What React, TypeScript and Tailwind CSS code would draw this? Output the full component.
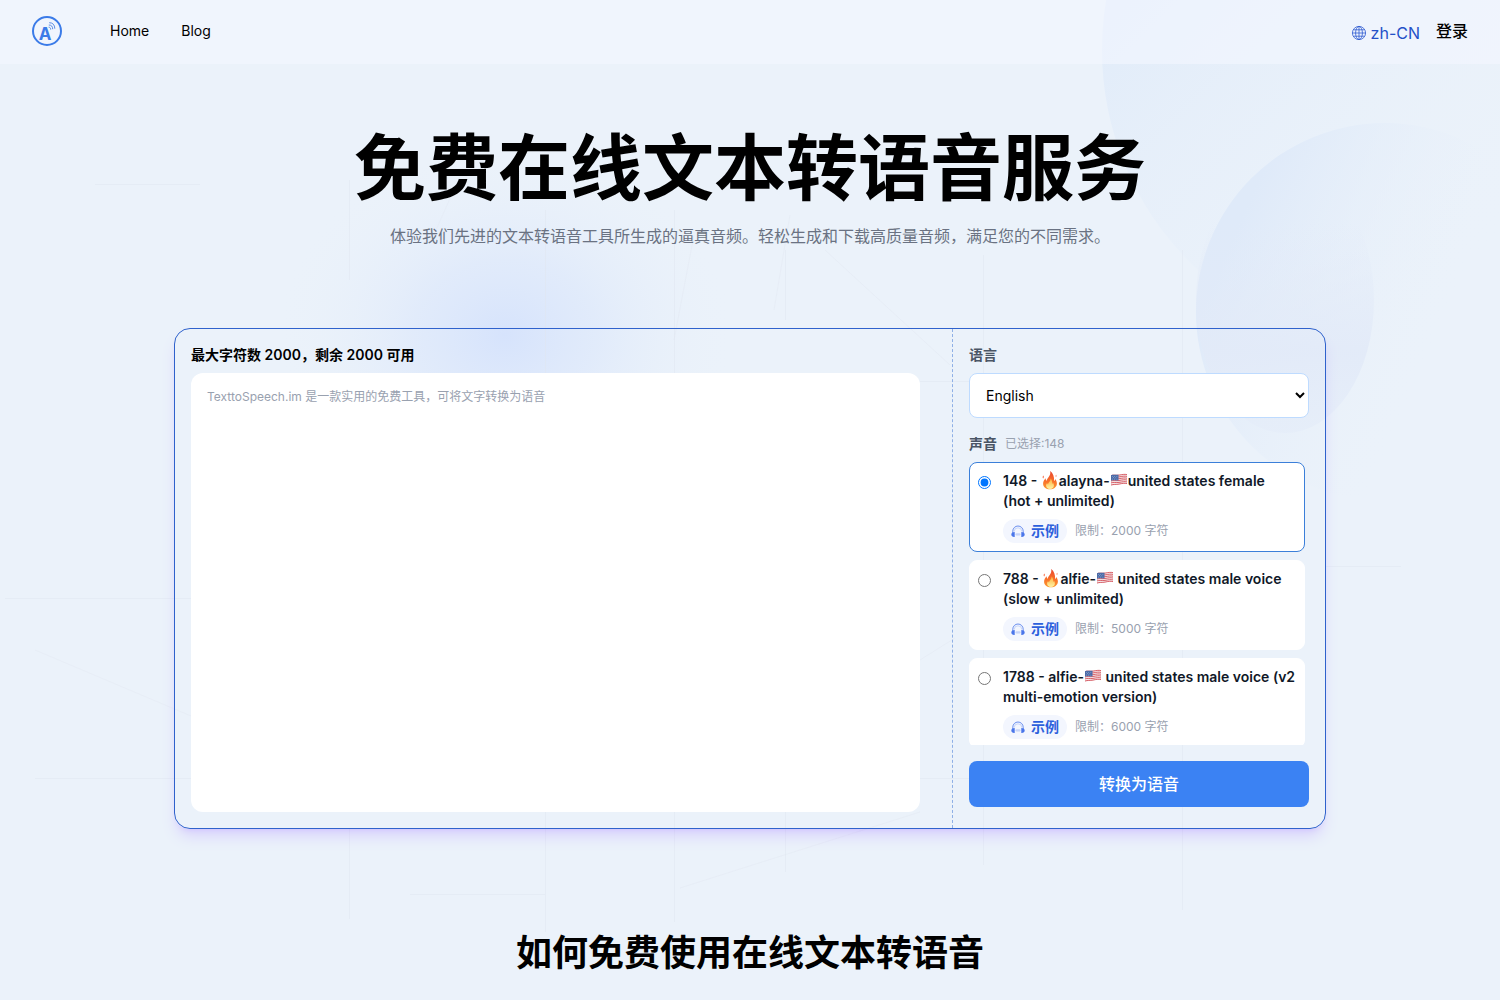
import React, { useState } from 'react';

interface Voice {
  id: number;
  name: React.ReactNode;
  limit: number;
}

const FireIcon = () => (
  <svg viewBox="0 0 17 20" className="inline-block w-[18px] h-5 -mt-1" role="img" aria-label="fire">
    <defs>
      <linearGradient id="flame" x1="0" y1="0" x2="0" y2="1">
        <stop offset="0" stopColor="#e8452c" />
        <stop offset="0.55" stopColor="#f9702a" />
        <stop offset="1" stopColor="#fb9a2e" />
      </linearGradient>
      <linearGradient id="flameCore" x1="0" y1="0" x2="0" y2="1">
        <stop offset="0" stopColor="#fdb13a" />
        <stop offset="1" stopColor="#fff3a6" />
      </linearGradient>
    </defs>
    <path
      fill="url(#flame)"
      d="M8.600 1c.7 2.500-.1 4.300-1.600 6.200C5.900 8.600 5.200 9.700 5.100 11 4.400 10.400 4.100 9.500 4.200 8.300 2.600 9.800 1.600 11.600 1.600 13.700 1.600 17.100 4.500 19.300 8.400 19.300s7-2.300 7-5.800c0-2.100-.8-3.400-1.500-4.600-.2 1-.6 1.700-1.300 2.200C12.900 6.700 11.600 3 8.600 1z"
    />
    <path
      fill="url(#flameCore)"
      d="M9 8.500c.3 2-1 3-2 4.400-.3.500-.4 1-.4 1.500-.5-.3-.8-.8-1-1.500-.7.800-1 1.700-1 2.600 0 2.200 1.600 3.500 3.900 3.500 2.200 0 3.900-1.300 3.900-3.500 0-1.200-.4-2-.9-2.800-.1.600-.3 1-.7 1.300.1-2.200-.4-4.200-1.800-5.500z"
    />
    <path fill="#f4572c" d="M1.800 5.500c.7 1 .6 1.900-.2 2.900-.6-.9-.5-1.900.2-2.900zM14.600 4.800c.5.900.5 1.600-.1 2.300-.5-.8-.4-1.500.1-2.300z" />
  </svg>
);

const FlagIcon = () => (
  <svg viewBox="0 0 17 14" className="inline-block w-[18px] h-[14px] -mt-1" role="img" aria-label="United States flag">
    <path fill="#f5e9ea" d="M.5 2.200C3 1.200 5.500 2.200 8.500 1.700S14 .6 16.500 1.200v9.600c-2.500-.6-5 .1-8 .6S3 12 .5 12.800z" />
    <g fill="none" stroke="#d9636b" strokeWidth="1">
      <path d="M.5 2.600C3 1.600 5.500 2.600 8.500 2.100s5.500-1.100 8-.5" />
      <path d="M.5 4.400C3 3.400 5.500 4.400 8.500 3.900s5.500-1.100 8-.5" />
      <path d="M.5 6.200C3 5.200 5.500 6.200 8.500 5.700s5.500-1.100 8-.5" />
      <path d="M.5 8C3 7 5.500 8 8.500 7.500s5.500-1.100 8-.5" />
      <path d="M.5 9.900C3 8.900 5.500 9.900 8.500 9.400s5.500-1.100 8-.5" />
      <path d="M.5 12C3 11 5.500 11.800 8.500 11.100s5.500-1.100 8-.5" />
    </g>
    <path fill="#4b6ba8" d="M.5 2.200C3 1.200 5 2.100 8 1.800v5.400C5 7.700 3 6.900.5 7.800z" />
    <g fill="#c9d5ec">
      <circle cx="2" cy="3.4" r="0.4" />
      <circle cx="4.200" cy="3.3" r="0.4" />
      <circle cx="6.400" cy="3.4" r="0.4" />
      <circle cx="3.100" cy="4.7" r="0.4" />
      <circle cx="5.300" cy="4.8" r="0.4" />
      <circle cx="2" cy="6" r="0.4" />
      <circle cx="4.200" cy="6" r="0.4" />
      <circle cx="6.400" cy="6.1" r="0.4" />
    </g>
  </svg>
);

const HeadphoneIcon = () => (
  <svg viewBox="0 0 14 14" className="w-3.5 h-3.5" fill="none" aria-hidden="true">
    <path d="M1.800 9V7.200a5.200 5.200 0 0 1 10.400 0V9" stroke="#5b83ec" strokeWidth="0.9" />
    <path d="M3.200 7.600a3.800 3.800 0 0 1 7.600 0" stroke="#a9bff6" strokeWidth="0.6" />
    <path d="M3.700 8v5C1.700 13.200.3 12.200.3 10.500S1.700 8 3.700 8zM10.300 8v5c2 .2 3.400-.8 3.400-2.500S12.300 8 10.300 8z" fill="#4a76ea" />
    <path d="M5 9.700v1.400M6 9v2.800M7 9.600v1.600M8 9v2.800M9 9.700v1.400" stroke="#9db6f5" strokeWidth="0.6" />
  </svg>
);

const GlobeIcon = () => (
  <svg viewBox="0 0 16 16" className="w-4 h-4" fill="none" stroke="#2f5bd0" strokeWidth="0.8" aria-hidden="true">
    <circle cx="8" cy="8" r="6.6" />
    <ellipse cx="8" cy="8" rx="3.4" ry="6.6" />
    <path d="M8 1.400v13.200M1.400 8h13.200M2.300 4.800h11.400M2.300 11.200h11.400" />
  </svg>
);

const Logo = () => (
  <svg viewBox="0 0 30 30" className="w-[30px] h-[30px]" fill="none" role="img" aria-label="TexttoSpeech">
    <circle cx="15" cy="15" r="14" stroke="#3b7be8" strokeWidth="2" />
    <text x="13" y="24" textAnchor="middle" fontSize="17" fontWeight="700" fill="#3b7be8">
      A
    </text>
    <g stroke="#4a80e0" strokeWidth="0.9" strokeLinecap="round">
      <path d="M17 11.200c1 0 1.700.8 1.700 2" />
      <path d="M17.200 9c2.200 0 3.500 1.500 3.500 3.800" />
      <path d="M17.600 6.700c3.300 0 5.200 2.200 5.200 5.600" />
    </g>
  </svg>
);

const Backdrop = () => (
  <svg
    viewBox="0 0 1500 1000"
    preserveAspectRatio="xMidYMin slice"
    className="absolute inset-0 w-full h-full pointer-events-none"
    fill="none"
    aria-hidden="true"
  >
    <defs>
      <radialGradient id="glow">
        <stop offset="0" stopColor="#d6e3fc" />
        <stop offset="0.4" stopColor="#dde8fb" stopOpacity="0.7" />
        <stop offset="1" stopColor="#ebf2fa" stopOpacity="0" />
      </radialGradient>
      <linearGradient id="discLarge" x1="0" y1="0.3" x2="0.6" y2="0.9">
        <stop offset="0" stopColor="#dbe8f9" stopOpacity="0.8" />
        <stop offset="1" stopColor="#ebf2fa" stopOpacity="0" />
      </linearGradient>
      <linearGradient id="discSmall" x1="0.1" y1="0.3" x2="0.8" y2="0.6">
        <stop offset="0" stopColor="#dfeaf9" />
        <stop offset="0.8" stopColor="#ebf2fa" stopOpacity="0" />
      </linearGradient>
      <linearGradient id="petal" x1="0" y1="0" x2="0" y2="1">
        <stop offset="0.2" stopColor="#e2eaf8" stopOpacity="0" />
        <stop offset="0.7" stopColor="#e2eaf8" stopOpacity="0.9" />
        <stop offset="1" stopColor="#e5edf9" stopOpacity="0.8" />
      </linearGradient>
    </defs>
    <ellipse cx="505" cy="335" rx="230" ry="190" fill="url(#glow)" />
    <circle cx="1402" cy="50" r="300" fill="url(#discLarge)" />
    <circle cx="1385" cy="312" r="189" fill="url(#discSmall)" />
    <ellipse cx="1285" cy="300" rx="89" ry="133" fill="url(#petal)" />
    <g stroke="#e0e6f0" strokeOpacity="0.5">
      <path d="M349.500 180v100M349.500 829v90M545.500 210v170M545.500 812v120M674.500 210v165M674.500 812v110M785.500 250v70M785.500 812v60M983.500 255v610M1182.500 250v660" />
      <path d="M95 184.500h105M5 598.500h186M35 778.500h156M410 894.500h135M920 778.500h60M1326 566.500h75M920 381.500h60" />
    </g>
    <g stroke="#e0e6f0" strokeOpacity="0.4">
      <path d="M35 650L191 716M436 230l20-45M674 340l20-105M825 250L950 365M790 215l-16 95M920 660l35-22M920 812L680 888" />
    </g>
  </svg>
);

const voices: Voice[] = [
  {
    id: 148,
    name: (
      <>
        <span>148 - </span>
        <FireIcon />
        <span>alayna-</span>
        <FlagIcon />
        <span>united states female </span>
        <span className="inline-block">(hot + unlimited)</span>
      </>
    ),
    limit: 2000,
  },
  {
    id: 788,
    name: (
      <>
        <span>788 - </span>
        <FireIcon />
        <span>alfie-</span>
        <FlagIcon />
        <span> united states male voice </span>
        <span className="inline-block">(slow + unlimited)</span>
      </>
    ),
    limit: 5000,
  },
  {
    id: 1788,
    name: (
      <>
        <span>1788 - alfie-</span>
        <FlagIcon />
        <span> united states male voice (v2 </span>
        <span className="inline-block">multi-emotion version)</span>
      </>
    ),
    limit: 6000,
  },
];

interface VoiceCardProps {
  voice: Voice;
  checked: boolean;
  onSelect: (id: number) => void;
}

const VoiceCard: React.FC<VoiceCardProps> = ({ voice, checked, onSelect }) => (
  <li
    className={`flex items-start gap-3 rounded-lg border bg-white py-2 pl-2 pr-1 ${
      checked ? 'border-[#3b7fd9]' : 'border-white'
    }`}
  >
    <input
      type="radio"
      name="voice"
      id={`voice-${voice.id}`}
      checked={checked}
      onChange={() => onSelect(voice.id)}
      className="mt-[5px] shrink-0"
    />
    <div className="min-w-0 flex-1">
      <label htmlFor={`voice-${voice.id}`} className="block text-sm font-semibold text-gray-900">
        {voice.name}
      </label>
      <div className="mt-2 flex items-center gap-2">
        <button
          type="button"
          className="flex h-6 items-center gap-1.5 rounded-full bg-[#f3f6fe] px-2 text-sm font-semibold text-[#2c60dc]"
        >
          <HeadphoneIcon />
          示例
        </button>
        <span className="text-xs text-gray-400">限制：{voice.limit} 字符</span>
      </div>
    </div>
  </li>
);

export default function App() {
  const [text, setText] = useState('');
  const [language, setLanguage] = useState('en');
  const [selected, setSelected] = useState(148);

  const maxLength = voices.find((voice) => voice.id === selected)?.limit ?? 2000;

  return (
    <div
      lang="zh-CN"
      className="relative min-h-screen overflow-hidden bg-[#ebf2fa] pb-6 font-['Inter','Noto_Sans_CJK_SC',sans-serif] text-black"
    >
      <Backdrop />

      <header className="relative flex h-16 items-center justify-between bg-[#f4f6ff]/60 px-8">
        <nav className="flex items-center gap-8 pb-0.5 text-sm">
          <a href="#" className="mr-4">
            <Logo />
          </a>
          <a href="#">Home</a>
          <a href="#">Blog</a>
        </nav>
        <div className="flex items-center gap-4">
          <button type="button" className="flex items-center gap-1 pt-0.5 text-[#2350c8]">
            <GlobeIcon />
            zh-CN
          </button>
          <a href="#" className="pb-0.5 font-medium">登录</a>
        </div>
      </header>

      <main className="relative px-8">
        <h1 className="mt-17 text-center text-7xl font-semibold">免费在线文本转语音服务</h1>
        <p className="mt-5 text-center text-gray-500">
          体验我们先进的文本转语音工具所生成的逼真音频。轻松生成和下载高质量音频，满足您的不同需求。
        </p>

        <form
          onSubmit={(e) => e.preventDefault()}
          className="mx-auto mt-20 flex max-w-6xl rounded-2xl border border-[#2f62cc] shadow-lg shadow-violet-500/20"
        >
          <div className="flex flex-1 flex-col gap-2 py-4 pl-4 pr-8">
            <label htmlFor="content" className="text-sm font-semibold">
              最大字符数 {maxLength}，剩余 {maxLength - text.length} 可用
            </label>
            <textarea
              id="content"
              value={text}
              maxLength={maxLength}
              onChange={(e) => setText(e.target.value)}
              placeholder="TexttoSpeech.im 是一款实用的免费工具，可将文字转换为语音"
              className="w-full flex-1 resize-none rounded-xl bg-white p-4 text-xs outline-none placeholder:text-gray-400"
            />
          </div>

          <div className="w-[373px] border-l border-dashed border-[#8fb0e6] px-4 pt-4 pb-[21px]">
            <label htmlFor="language" className="block text-sm font-semibold text-gray-600">
              语言
            </label>
            <select
              id="language"
              value={language}
              onChange={(e) => setLanguage(e.target.value)}
              className="mt-2 h-[45px] w-full rounded-lg border border-blue-200 bg-white px-3 text-sm"
            >
              <option value="en">English</option>
              <option value="zh">中文</option>
            </select>

            <div className="mt-4 flex items-center gap-2">
              <span className="text-sm font-semibold text-gray-600">声音</span>
              <span className="text-xs text-gray-400">已选择:{selected}</span>
            </div>
            <ul className="mt-2 mr-1 h-[283px] space-y-2 overflow-y-auto [scrollbar-width:none]">
              {voices.map((voice) => (
                <VoiceCard
                  key={voice.id}
                  voice={voice}
                  checked={voice.id === selected}
                  onSelect={setSelected}
                />
              ))}
            </ul>

            <button
              type="submit"
              className="mt-4 h-[46px] w-full rounded-lg bg-[#3b82f3] font-medium text-white"
            >
              转换为语音
            </button>
          </div>
        </form>

        <h2 className="mt-26 text-center text-4xl font-semibold">如何免费使用在线文本转语音</h2>
      </main>
    </div>
  );
}
